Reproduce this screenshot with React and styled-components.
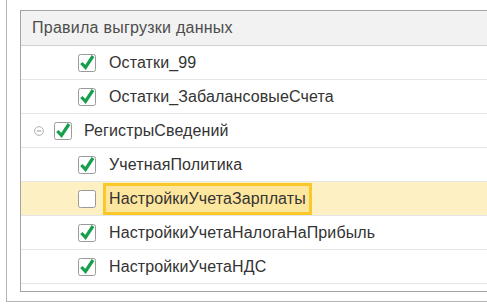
import React from "react";
import styled, { createGlobalStyle } from "styled-components";

const Global = createGlobalStyle`
  html, body { margin: 0; padding: 0; background: #fff; }
  body { font-family: Arial, "Liberation Sans", sans-serif; overflow: hidden; }
`;

const Frame = styled.div`
  margin-left: 6px;
  height: 302px;
  box-sizing: border-box;
  border-left: 1px solid #b4b4b4;
  border-bottom: 1px solid #b4b4b4;
  padding: 10px 0 9px 13px;
  display: flex;
  flex-direction: column;
`;

const Table = styled.div`
  flex: 1;
  border-top: 1px solid #a4a4a4;
  border-left: 1px solid #a4a4a4;
  border-bottom: 1px solid #a4a4a4;
  display: flex;
  flex-direction: column;
`;

const Header = styled.div`
  height: 34px;
  background: #f2f2f2;
  border-bottom: 1px solid #d0d0d0;
  display: flex;
  align-items: center;
  padding-left: 11px;
  font-size: 16px;
  letter-spacing: 0.25px;
  color: #4d4d4d;
`;

const Row = styled.div`
  height: 33px;
  border-bottom: 1px solid #e6e6e6;
  display: flex;
  align-items: center;
  padding-left: ${(p) => p.$indent}px;
  background: ${(p) => (p.$active ? "#fdf1c4" : "transparent")};
  font-size: 16px;
  letter-spacing: 0.12px;
  color: #333;
`;

const Toggle = styled.span`
  width: 14px;
  display: flex;
  align-items: center;
  margin-right: 6px;
`;

const Box = styled.span`
  width: 18px;
  height: 18px;
  display: flex;
  margin-right: ${(p) => p.$gap}px;
`;

const Label = styled.span`
  white-space: nowrap;
  line-height: 18px;
  padding: ${(p) => (p.$focused ? "4px 3px 4px 3px" : "0")};
  margin-left: ${(p) => (p.$focused ? "-6px" : "0")};
  border: ${(p) => (p.$focused ? "3px solid #fac82a" : "none")};
  background: ${(p) => (p.$focused ? "#fde69e" : "transparent")};
`;

const Check = ({ checked }) => (
  <svg width="18" height="18" viewBox="0 0 18 18" style={{ overflow: "visible" }}>
    <rect x="0.5" y="0.5" width="17" height="17" rx="2" fill="#fff" stroke="#9a9a9a" />
    {checked && (
      <path d="M3.3 9 L7.5 13.4 L15 2" fill="none" stroke="#16a04e" strokeWidth="3.2" strokeLinecap="butt" strokeLinejoin="miter" />
    )}
  </svg>
);

const Minus = () => (
  <svg width="10" height="10" viewBox="0 0 10 10">
    <circle cx="5" cy="5" r="4.4" fill="none" stroke="#b0b0b0" strokeWidth="1" />
    <path d="M2.8 5 H7.2" stroke="#9a9a9a" strokeWidth="1" />
  </svg>
);

const rows = [
  { text: "Остатки_99", level: 1, checked: true },
  { text: "Остатки_ЗабалансовыеСчета", level: 1, checked: true },
  { text: "РегистрыСведений", level: 0, checked: true, group: true },
  { text: "УчетнаяПолитика", level: 1, checked: true },
  { text: "НастройкиУчетаЗарплаты", level: 1, checked: false, active: true },
  { text: "НастройкиУчетаНалогаНаПрибыль", level: 1, checked: true },
  { text: "НастройкиУчетаНДС", level: 1, checked: true },
];

export default function App() {
  return (
    <>
      <Global />
      <Frame>
        <Table>
          <Header>Правила выгрузки данных</Header>
          {rows.map((r) => (
            <Row key={r.text} $indent={r.level ? 57 : 13} $active={r.active}>
              {r.group && (
                <Toggle>
                  <Minus />
                </Toggle>
              )}
              <Box $gap={r.level ? 13 : 12}>
                <Check checked={r.checked} />
              </Box>
              <Label $focused={r.active}>{r.text}</Label>
            </Row>
          ))}
        </Table>
      </Frame>
    </>
  );
}
